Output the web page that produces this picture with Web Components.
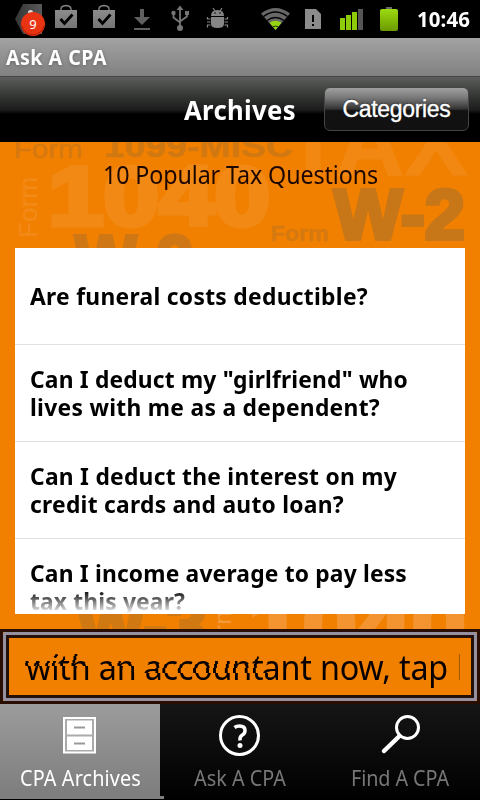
<!DOCTYPE html>
<html lang="en"><head><meta charset="utf-8"><title>Ask A CPA</title>
<style>
html,body{margin:0;width:480px;height:800px;overflow:hidden;background:#000}
</style></head><body>
<cpa-app></cpa-app>
<script>
const define = (name, html, init) => customElements.define(name, class extends HTMLElement {
  connectedCallback() {
    if (this.shadowRoot) return;
    this.attachShadow({mode: 'open'}).innerHTML = html;
    if (init) init(this, this.shadowRoot);
  }
});

// A line of slightly condensed text, spaced evenly to the width in its "w" attribute.
define('fit-text', `<style>:host{display:inline-block;white-space:pre}span{display:inline-block;transform-origin:0 0}</style><span></span>`, (el, root) => {
  const s = root.querySelector('span');
  s.textContent = el.getAttribute('text');
  const k = +(el.getAttribute('k') || .95);
  const w = +el.getAttribute('w'), n = s.textContent.length;
  const gap = (w / k - s.getBoundingClientRect().width) / n;
  s.style.letterSpacing = gap + 'px';
  s.style.transform = 'scaleX(' + k + ')';
  s.style.marginRight = (w - w / k) + 'px';
});

define('status-bar', `<style>
:host{display:block;height:38px;background:#000;color:#fff}
.bar{display:flex;height:38px;align-items:center;font:bold 21.5px/38px "Noto Sans",sans-serif}
svg{display:block;flex:none}
fit-text{margin-left:7px;height:38px}
</style><div class="bar">
<svg width="410" height="38" viewBox="0 0 410 38">
<defs><linearGradient id="g" x2="0" y2="1"><stop stop-color="#8c8c8c"/><stop offset="1" stop-color="#757575"/></linearGradient>
<linearGradient id="h" x2="1"><stop stop-color="#343434"/><stop offset="1" stop-color="#595959"/></linearGradient>
<linearGradient id="v" x2="0" y2="1"><stop stop-color="#9cdb10"/><stop offset="1" stop-color="#6b9900"/></linearGradient></defs>
<path d="M23 4H42V34H23L15 19Z" fill="url(#h)"/><circle cx="30.5" cy="12.5" r="2.5" fill="#ddd"/>
<circle cx="33" cy="24" r="12" fill="#e93413"/><path d="M22 26a11.3 11.3 0 0 0 22 0" fill="none" stroke="#b71d08"/>
<text x="33" y="29" fill="#fff" font-family="Noto Sans" font-weight="normal" font-size="13" text-anchor="middle">9</text>
<g id="bag"><path d="M61 10v-1q0-3 5-3.500q5 .5 5 3.500v1" fill="none" stroke="#858585" stroke-width="1.400"/><rect x="55" y="10" width="22" height="18" fill="url(#g)"/><path d="M60.500 19l4 4.500 8-9" fill="none" stroke="#000" stroke-width="2.800"/></g>
<use href="#bag" x="38"/>
<path d="M140 9h4v8h6l-8 8-8-8h6zM134 28h16v2h-16z" fill="#606060"/>
<g stroke="#757575" fill="none" stroke-width="1.800"><path d="M180 9v19M173.500 13v4.500l6.500 5M187 13v3.500l-7 5"/></g><g fill="#757575"><path d="M176.500 10h7L180 5.500zM185 11h4v4h-4z"/><circle cx="173.500" cy="13" r="2.200"/><circle cx="180" cy="28" r="3"/></g>
<g fill="#858585"><path d="M211 16q0-6 6.500-6t6.500 6zM211 17h13v7q0 4-6.500 4t-6.500-4z"/><path d="M213 8l2 3M222 8l-2 3M210.500 19h-3v-2M210.500 22h-3.500M210.500 25h-3v2.500M224.500 19h3v-2M224.500 22h3.500M224.500 25h3v2.500" stroke="#858585" fill="none" stroke-width="1.200"/><circle cx="215" cy="13" r=".8" fill="#000"/><circle cx="220" cy="13" r=".8" fill="#000"/></g>
<path d="M261 13.500q14.500-11 29 0L275.500 30z" fill="#686868"/><path d="M263.500 16.500q12-9 24 0M267 20.500q8.500-6 17 0" fill="none" stroke="#000" stroke-width="1.300"/><path d="M269.500 22.800q6-4.300 12 0l-6 7.200z" fill="#96d411"/><path d="M272.500 27q3-2 6 0" fill="none" stroke="#000" stroke-width=".8"/>
<path d="M305 9h11l5 5v15h-16z" fill="#8b8b8b"/><path d="M312 15h2v7h-2zM312 24h2v2h-2z" fill="#000"/>
<g fill="#8dcc06"><path d="M340 18h5v12h-5zM346 15h5v15h-5zM352 12h5v18h-5z"/></g><path d="M358 9h5v21h-5z" fill="#555"/>
<path d="M386 7h6v3h-6z" fill="#686868"/><rect x="380" y="9" width="18" height="22" rx="2" fill="url(#v)"/>
</svg><fit-text text="10:46" w="53"></fit-text></div>`);

define('title-bar', `<style>:host{display:block;height:38px;background:linear-gradient(#a2a2a2,#818181)}
div{padding-left:6px;font:bold 21.5px/37px "Noto Sans",sans-serif;color:#fff;text-shadow:0 1px 4px #666}</style><div><fit-text text="Ask A CPA" w="101" k=".91"></fit-text></div>`);

define('nav-bar', `<style>
:host{display:block;height:66px;background:linear-gradient(#5c5e5b 0,#3a3c39 16px,#1b1c1b 33px,#000 37px);box-sizing:border-box;border-top:1px solid #444}
.row{display:flex;align-items:center;height:65px;justify-content:flex-end}
.t{font:bold 27px/65px "Noto Sans",sans-serif;color:#fff;margin-right:28px}
button{all:unset;box-sizing:border-box;width:145px;height:44px;margin:-1px 11px 0 0;border:1px solid #454545;border-radius:6px;background:linear-gradient(#a0a0a0 0,#777 24%,#333 50%,#121212 54%,#111);color:#fff;text-align:center;font:23px/42px "Liberation Sans",sans-serif;-webkit-text-stroke:.3px #fff;text-shadow:0 -1px 1px #333}
</style><div class="row"><div class="t"><fit-text text="Archives" w="112"></fit-text></div><button><fit-text text="Categories" w="108" k="1"></fit-text></button></div>`);

define('question-row', `<style>:host{display:flex;flex-direction:column;justify-content:center;height:97px;box-sizing:border-box;padding:0 15px;border-bottom:1px solid #e2e2e2;background:#fff;font:bold 24px/28px "Noto Sans",sans-serif;color:#000}</style><slot></slot>`);

define('question-list', `<style>:host{display:block;height:366px;margin:0 15px;overflow:hidden;background:#fff;position:relative}
:host::after{content:"";position:absolute;left:0;right:0;bottom:0;height:24px;background:linear-gradient(#fff0,#fff)}</style><slot></slot>`);

// Faint form names printed behind the page content.
define('form-backdrop', `<style>:host{position:absolute;inset:0;background:#f18000;overflow:hidden}svg{display:block}</style>
<svg width="480" height="488" viewBox="0 142 480 488" font-family="Liberation Sans,sans-serif" font-weight="bold">
<g fill="#c3751b" stroke="#c3751b"><text x="14" y="158" font-size="25" stroke-width=".5" font-weight="normal" textLength="69" lengthAdjust="spacingAndGlyphs" opacity=".6">Form</text><text x="104" y="157" font-size="32" stroke-width=".7" textLength="189" lengthAdjust="spacingAndGlyphs" opacity=".65">1099-MISC</text>
<text x="334" y="239" font-size="70" stroke-width="4" textLength="131" lengthAdjust="spacingAndGlyphs" opacity=".9">W-2</text><text x="271" y="241" font-size="22" stroke-width=".5" textLength="58" lengthAdjust="spacingAndGlyphs" opacity=".6">Form</text>
<text x="75" y="285" font-size="70" stroke-width="4" textLength="118" lengthAdjust="spacingAndGlyphs" opacity=".75">W-2</text>
<text x="77" y="651" font-size="72" stroke-width="4" textLength="130" lengthAdjust="spacingAndGlyphs" opacity=".7">W-3</text></g>
<g fill="#f38d1f" stroke="#f38d1f"><text x="48" y="225" font-size="84" stroke-width="5" textLength="222" lengthAdjust="spacingAndGlyphs" opacity=".7">1040</text><text x="284" y="175" font-size="92" stroke-width="1" textLength="184" lengthAdjust="spacingAndGlyphs" opacity=".6">TAX</text>
<text transform="translate(37 238) rotate(-90)" font-size="26" stroke-width=".3" font-weight="normal" textLength="61" lengthAdjust="spacingAndGlyphs" opacity=".8">Form</text></g>
<g fill="#f49a3c"><text x="248" y="653" font-size="84" stroke="#f49a3c" stroke-width="4" textLength="218" lengthAdjust="spacingAndGlyphs" opacity=".8">1040</text><text transform="translate(231 664) rotate(-90)" font-size="24" font-weight="normal" textLength="61" lengthAdjust="spacingAndGlyphs">Form</text></g>
</svg>`);

define('ticker-strip', `<style>
:host{display:block;height:75px;box-sizing:border-box;background:#f18000;position:relative;border:3px solid #2a0e04}
.a{box-sizing:border-box;height:69px;border:3px solid #9490a0;border-radius:2px}
.b{box-sizing:border-box;height:63px;border:3px solid #241008;background:#f18000;display:flex;overflow:hidden;padding-left:16px;font:34px/58px "Noto Sans",sans-serif;color:#080000;white-space:pre}
.txt{filter:url(#tear);height:57px}
.next{width:4px;overflow:hidden;opacity:.3;margin-left:8px}
svg{position:absolute;width:0;height:0}
</style><svg><filter id="tear" filterUnits="userSpaceOnUse" x="-10" y="0" width="460" height="80" color-interpolation-filters="sRGB"></filter></svg>
<div class="a"><div class="b"><div class="txt"><fit-text text="with an accountant now, tap" w="423"></fit-text></div><div class="next">h</div></div></div>`, (el, root) => {
  const f = root.querySelector('filter');
  const slices = [];
  const column = (x, w, tear) => {
    const dx = [3, 2, 1, 0, -1], h = (tear - 12) / 5;
    let y = 0;
    dx.forEach((d, i) => { const end = Math.round(12 + h * (i + 1)); slices.push([x, y, w, end - y, d]); y = end; });
    slices.push([x, y, w, 80 - y, 1]);
  };
  column(-10, 119, 28);
  column(109, 134, 35);
  slices.push([243, 0, 207, 80, 0]);
  f.innerHTML = slices.map(([x, y, w, h, d], i) => `<feOffset in="SourceGraphic" dx="${d}" dy="0" x="${x}" y="${y}" width="${w}" height="${h}" result="s${i}"/>`).join('')
    + '<feMerge>' + slices.map((_, i) => `<feMergeNode in="s${i}"/>`).join('') + '</feMerge>';
});

define('tab-item', `<style>
:host{flex:1;box-sizing:border-box;height:95px;display:flex;flex-direction:column;align-items:center;padding-top:4px;color:#777;font:22px/29px "Noto Sans",sans-serif}
:host([active]){background:linear-gradient(#9c9c9c,#7c7c7c);color:#fff}
</style><slot></slot>`);

define('tab-bar', `<style>:host{display:flex;height:97px;background:linear-gradient(#151515,#000);position:relative}
:host::before{content:"";position:absolute;left:0;top:92px;width:164px;height:3px;background:#7e7e7e}
svg{display:block}fit-text{margin-top:-1px}</style>
<tab-item active><svg width="56" height="56" viewBox="0 0 56 56"><rect x="12" y="10" width="31" height="34.500" fill="#aaa" stroke="#fff" stroke-width="2"/><rect x="15" y="12.500" width="25" height="14" fill="#fff"/><rect x="15" y="28.500" width="25" height="13.500" fill="#fff"/><path d="M22 19.500h11M22 35.500h11" stroke="#999" stroke-width="2"/></svg><fit-text text="CPA Archives" w="121" k=".9"></fit-text></tab-item>
<tab-item><svg width="56" height="56" viewBox="0 0 56 56"><circle cx="27.500" cy="27.500" r="19" fill="none" stroke="#fff" stroke-width="3"/><path d="M22.500 19.500q2-1.500 5-1.500 5.500 0 5.500 4.500 0 3-2.700 4.500t-2.300 5.500" fill="none" stroke="#fff" stroke-width="3.500"/><circle cx="28" cy="37.500" r="2.500" fill="#fff"/></svg><fit-text text="Ask A CPA" w="92" k=".9"></fit-text></tab-item>
<tab-item><svg width="56" height="56" viewBox="0 0 56 56"><circle cx="35.500" cy="19.500" r="11" fill="none" stroke="#fff" stroke-width="3"/><path d="M27.500 28L12 43" stroke="#fff" stroke-width="4.500" stroke-linecap="round"/></svg><fit-text text="Find A CPA" w="98" k=".9"></fit-text></tab-item>`);

define('cpa-app', `<style>
:host{display:block;width:480px;height:800px;overflow:hidden;background:#000}
.page{position:relative;height:487px}
.content{position:relative}
h1{margin:0;height:106px;box-sizing:border-box;padding-top:16px;text-align:center;font:24.5px/34px "Noto Sans",sans-serif;color:#1d0700}
</style>
<status-bar></status-bar><title-bar></title-bar><nav-bar></nav-bar>
<div class="page"><form-backdrop></form-backdrop><div class="content"><h1><fit-text text="10 Popular Tax Questions" w="275"></fit-text></h1>
<question-list>
<question-row><fit-text text="Are funeral costs deductible?" w="338"></fit-text></question-row>
<question-row><fit-text text='Can I deduct my "girlfriend" who' w="378"></fit-text><fit-text text="lives with me as a dependent?" w="350"></fit-text></question-row>
<question-row><fit-text text="Can I deduct the interest on my" w="367"></fit-text><fit-text text="credit cards and auto loan?" w="314"></fit-text></question-row>
<question-row><fit-text text="Can I income average to pay less" w="377"></fit-text><fit-text text="tax this year?" w="155"></fit-text></question-row>
</question-list></div></div>
<ticker-strip></ticker-strip><tab-bar></tab-bar>`);
</script></body></html>
